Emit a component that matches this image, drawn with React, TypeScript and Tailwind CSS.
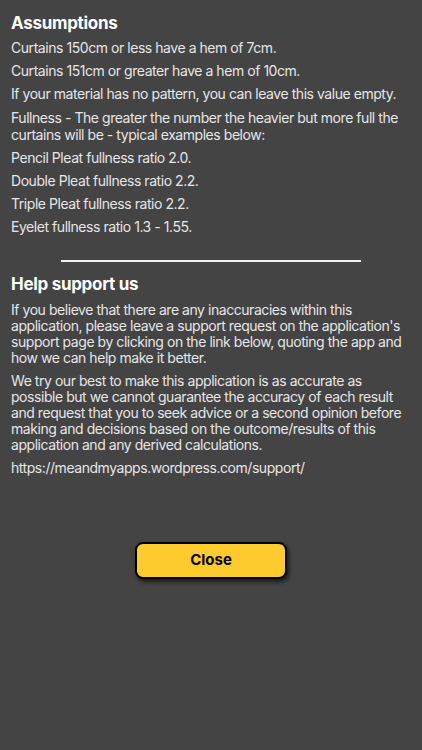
export default function App() {
  const p = "text-[14px] leading-[16px] tracking-[-0.45px] text-[#e6e6e6]";
  return (
    <div className="w-[422px] h-[750px] bg-[#444444] overflow-hidden" style={{ fontFamily: "Inter, 'Noto Sans', sans-serif" }}>
      <div className="px-[11px] pt-[12px]">
        <h1 className="text-[17px] leading-[22px] font-bold text-white tracking-[-0.3px]">Assumptions</h1>
        <div className="flex flex-col gap-[7px] mt-[6px]">
          <p className={p}>Curtains 150cm or less have a hem of 7cm.</p>
          <p className={p}>Curtains 151cm or greater have a hem of 10cm.</p>
          <p className={p}>If your material has no pattern, you can leave this value empty.</p>
          <p className={`${p} leading-[17px]`}>Fullness - The greater the number the heavier but more full the curtains will be - typical examples below:</p>
          <p className={p}>Pencil Pleat fullness ratio 2.0.</p>
          <p className={p}>Double Pleat fullness ratio 2.2.</p>
          <p className={p}>Triple Pleat fullness ratio 2.2.</p>
          <p className={p}>Eyelet fullness ratio 1.3 - 1.55.</p>
        </div>
        <div className="flex justify-center mt-[25px]">
          <div className="w-[300px] h-[2px] bg-[#f0f0f0]" />
        </div>
        <h2 className="text-[17px] leading-[22px] font-bold text-white mt-[11px] tracking-[-0.3px]">Help support us</h2>
        <div className="flex flex-col gap-[7px] mt-[7px]">
          <p className={p}>If you believe that there are any inaccuracies within this application, please leave a support request on the application's support page by clicking on the link below, quoting the app and how we can help make it better.</p>
          <p className={p}>We try our best to make this application is as accurate as possible but we cannot guarantee the accuracy of each result and request that you to seek advice or a second opinion before making and decisions based on the outcome/results of this application and any derived calculations.</p>
          <p className={p}>https://meandmyapps.wordpress.com/support/</p>
        </div>
      </div>
      <div className="flex justify-center mt-[66px]">
        <button className="w-[152px] h-[37px] rounded-[8px] bg-[#fecb2f] border-2 border-black text-black font-bold text-[15px] shadow-[2px_3px_4px_rgba(0,0,0,0.6)]">Close</button>
      </div>
    </div>
  );
}
